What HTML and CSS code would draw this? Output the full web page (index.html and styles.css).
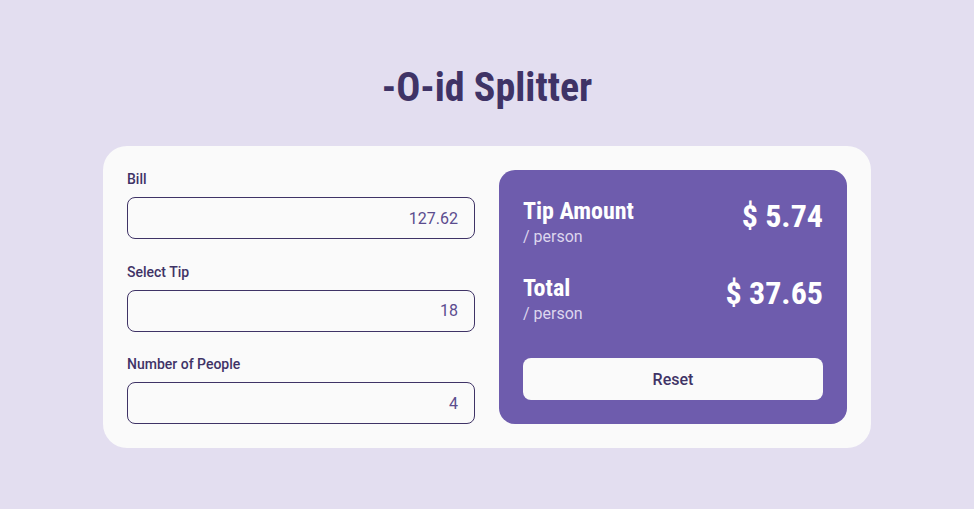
FILE: index.html
```html
<!DOCTYPE html>
<html lang="en">
<head>
<meta charset="utf-8">
<title>-O-id Splitter</title>
<link rel="stylesheet" href="styles.css">
</head>
<body>
<main class="page">
  <h1 class="title">-O-id Splitter</h1>
  <section class="card">
    <div class="inputs">
      <label class="field">
        <span class="field-label">Bill</span>
        <span class="field-input">127.62</span>
      </label>
      <label class="field">
        <span class="field-label">Select Tip</span>
        <span class="field-input">18</span>
      </label>
      <label class="field">
        <span class="field-label">Number of People</span>
        <span class="field-input">4</span>
      </label>
    </div>
    <div class="results">
      <div class="result-row">
        <div class="result-text">
          <div class="result-name">Tip Amount</div>
          <div class="result-unit">/ person</div>
        </div>
        <div class="result-value">$ 5.74</div>
      </div>
      <div class="result-row">
        <div class="result-text">
          <div class="result-name">Total</div>
          <div class="result-unit">/ person</div>
        </div>
        <div class="result-value">$ 37.65</div>
      </div>
      <button class="reset" type="button">Reset</button>
    </div>
  </section>
</main>
</body>
</html>
```
FILE: styles.css
```css
* { box-sizing: border-box; }
html, body { margin: 0; padding: 0; }
body {
  background: #e3def0;
  font-family: Roboto, "Noto Sans", sans-serif;
  color: #3f3366;
  width: 974px;
  height: 509px;
}
.page {
  display: flex;
  flex-direction: column;
  align-items: center;
  padding-top: 64px;
}
.title {
  margin: 0 0 34px;
  font-family: "Roboto Condensed", Roboto, sans-serif;
  font-stretch: condensed;
  font-weight: 700;
  font-size: 40px;
  line-height: 48px;
  color: #3f3366;
}
.card {
  width: 768px;
  background: #fafafa;
  border-radius: 24px;
  padding: 24px;
  display: grid;
  grid-template-columns: 1fr 1fr;
  gap: 24px;
}
.inputs {
  display: flex;
  flex-direction: column;
  gap: 23.5px;
}
.field {
  display: flex;
  flex-direction: column;
  gap: 8px;
}
.field-label {
  font-size: 14px;
  font-weight: 500;
  line-height: 19px;
  color: #3f3366;
}
.field-input {
  height: 42px;
  border: 1px solid #3f3366;
  border-radius: 8px;
  display: flex;
  align-items: center;
  justify-content: flex-end;
  padding: 0 16px;
  font-size: 16px;
  color: #5b4c8e;
}
.results {
  background: #6e5cad;
  border-radius: 16px;
  padding: 24px;
  display: flex;
  flex-direction: column;
  color: #ffffff;
}
.result-row {
  display: flex;
  justify-content: space-between;
  align-items: flex-start;
  margin-bottom: 24px;
}
.result-name {
  font-family: "Roboto Condensed", Roboto, sans-serif;
  font-stretch: condensed;
  font-weight: 700;
  font-size: 24px;
  line-height: 34px;
}
.result-unit {
  margin-top: -1px;
  font-size: 16px;
  line-height: 20px;
  color: #ddd6ee;
}
.result-value {
  padding-top: 2px;
  font-family: "Roboto Condensed", Roboto, sans-serif;
  font-stretch: condensed;
  font-weight: 700;
  font-size: 32px;
  line-height: 40px;
}
.reset {
  margin-top: auto;
  height: 42px;
  border: 0;
  border-radius: 8px;
  background: #fafafa;
  color: #3f3366;
  font-family: Roboto, sans-serif;
  font-size: 16px;
  font-weight: 500;
  cursor: pointer;
}
```
